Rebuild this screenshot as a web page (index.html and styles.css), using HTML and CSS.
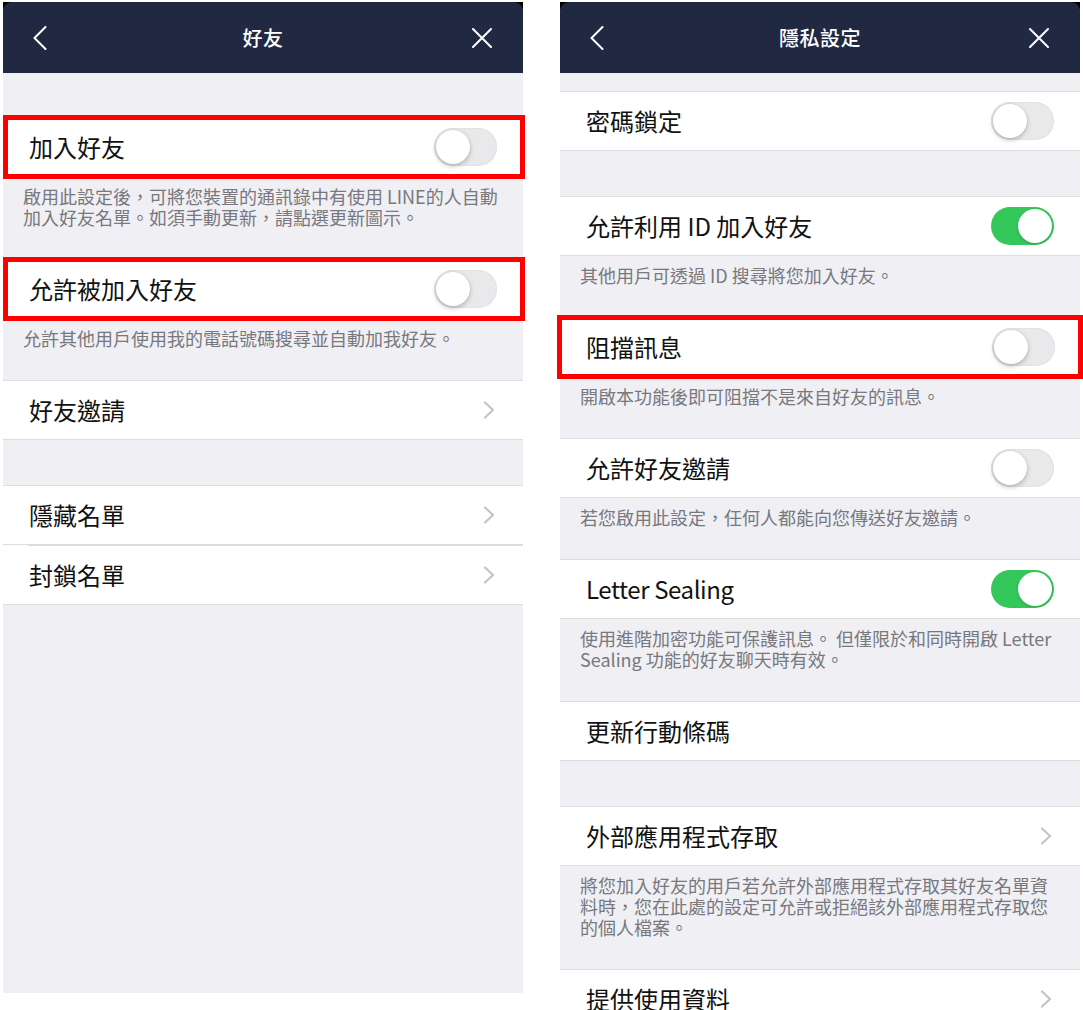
FILE: index.html
```html
<!DOCTYPE html>
<html lang="zh-Hant">
<head>
<meta charset="utf-8">
<title>好友 / 隱私設定</title>
<link rel="stylesheet" href="styles.css">
</head>
<body>
<div class="screens">
  <section class="panel panel-left">
    <header class="nav">
      <svg class="nav-back" width="14" height="24" viewBox="0 0 14 24"><polyline points="12.5,1 1.5,12 12.5,23" fill="none" stroke="#fff" stroke-width="2" stroke-linecap="round" stroke-linejoin="round"/></svg>
      <h1 class="nav-title">好友</h1>
      <svg class="nav-close" width="20" height="20" viewBox="0 0 20 20"><path d="M1 1 L19 19 M19 1 L1 19" fill="none" stroke="#fff" stroke-width="2" stroke-linecap="round"/></svg>
    </header>
    <div class="content">
      <div class="gap gap-l-top"></div>
      <div class="hl hl-left">
        <div class="row row-hl row-hl-left"><span class="label">加入好友</span><span class="toggle"></span></div>
      </div>
      <p class="desc">啟用此設定後，可將您裝置的通訊錄中有使用 LINE的人自動<br>加入好友名單。如須手動更新，請點選更新圖示。</p>
      <div class="hl hl-left">
        <div class="row row-hl row-hl-left"><span class="label">允許被加入好友</span><span class="toggle"></span></div>
      </div>
      <p class="desc">允許其他用戶使用我的電話號碼搜尋並自動加我好友。</p>
      <div class="row"><span class="label">好友邀請</span><svg class="chev" width="12" height="18" viewBox="0 0 12 18"><polyline points="2,1.5 10,9 2,16.5" fill="none" stroke="#c4c4c9" stroke-width="2.2" stroke-linecap="round" stroke-linejoin="round"/></svg></div>
      <div class="gap gap-45"></div>
      <div class="row row-group-top"><span class="label">隱藏名單</span><svg class="chev" width="12" height="18" viewBox="0 0 12 18"><polyline points="2,1.5 10,9 2,16.5" fill="none" stroke="#c4c4c9" stroke-width="2.2" stroke-linecap="round" stroke-linejoin="round"/></svg></div>
      <div class="row row-inset"><span class="label">封鎖名單</span><svg class="chev" width="12" height="18" viewBox="0 0 12 18"><polyline points="2,1.5 10,9 2,16.5" fill="none" stroke="#c4c4c9" stroke-width="2.2" stroke-linecap="round" stroke-linejoin="round"/></svg></div>
    </div>
  </section>

  <section class="panel panel-right">
    <header class="nav">
      <svg class="nav-back" width="14" height="24" viewBox="0 0 14 24"><polyline points="12.5,1 1.5,12 12.5,23" fill="none" stroke="#fff" stroke-width="2" stroke-linecap="round" stroke-linejoin="round"/></svg>
      <h1 class="nav-title">隱私設定</h1>
      <svg class="nav-close" width="20" height="20" viewBox="0 0 20 20"><path d="M1 1 L19 19 M19 1 L1 19" fill="none" stroke="#fff" stroke-width="2" stroke-linecap="round"/></svg>
    </header>
    <div class="content">
      <div class="gap gap-r-top"></div>
      <div class="row"><span class="label">密碼鎖定</span><span class="toggle"></span></div>
      <div class="gap gap-45"></div>
      <div class="row"><span class="label">允許利用 ID 加入好友</span><span class="toggle on"></span></div>
      <p class="desc">其他用戶可透過 ID 搜尋將您加入好友。</p>
      <div class="hl hl-right">
        <div class="row row-hl row-hl-right"><span class="label">阻擋訊息</span><span class="toggle"></span></div>
      </div>
      <p class="desc">開啟本功能後即可阻擋不是來自好友的訊息。</p>
      <div class="row"><span class="label">允許好友邀請</span><span class="toggle"></span></div>
      <p class="desc">若您啟用此設定，任何人都能向您傳送好友邀請。</p>
      <div class="row"><span class="label label-latin">Letter Sealing</span><span class="toggle on"></span></div>
      <p class="desc">使用進階加密功能可保護訊息。 但僅限於和同時開啟 Letter<br>Sealing 功能的好友聊天時有效。</p>
      <div class="row"><span class="label">更新行動條碼</span></div>
      <div class="gap gap-45"></div>
      <div class="row"><span class="label">外部應用程式存取</span><svg class="chev" width="12" height="18" viewBox="0 0 12 18"><polyline points="2,1.5 10,9 2,16.5" fill="none" stroke="#c4c4c9" stroke-width="2.2" stroke-linecap="round" stroke-linejoin="round"/></svg></div>
      <p class="desc">將您加入好友的用戶若允許外部應用程式存取其好友名單資<br>料時，您在此處的設定可允許或拒絕該外部應用程式存取您<br>的個人檔案。</p>
      <div class="row"><span class="label">提供使用資料</span><svg class="chev" width="12" height="18" viewBox="0 0 12 18"><polyline points="2,1.5 10,9 2,16.5" fill="none" stroke="#c4c4c9" stroke-width="2.2" stroke-linecap="round" stroke-linejoin="round"/></svg></div>
    </div>
  </section>
</div>
</body>
</html>
```

FILE: styles.css
```css
html, body {
  margin: 0;
  padding: 0;
  background: #ffffff;
  overflow: hidden;
}

body {
  font-family: "Noto Sans CJK TC", "Noto Sans", sans-serif;
  color: #111111;
}

.screens {
  display: flex;
  gap: 37px;
  padding: 2px 0 0 3px;
  height: 1008px;
  overflow: hidden;
}

.panel {
  width: 520px;
  flex: none;
  background: linear-gradient(#000, #000) top / 100% 8px no-repeat, #efeff4;
  display: flex;
  flex-direction: column;
}

.panel-left {
  height: 991px;
}

.panel-right {
  height: 1030px;
}

.nav {
  height: 71px;
  flex: none;
  background: #212942;
  border-radius: 9px 9px 0 0;
  display: grid;
  grid-template-columns: 1fr auto 1fr;
  align-items: center;
  padding: 0 31px 0 30px;
  box-sizing: border-box;
}

.nav-back {
  display: block;
  width: 14px;
  height: 24px;
  justify-self: start;
}

.nav-close {
  display: block;
  width: 20px;
  height: 20px;
  justify-self: end;
}

.nav-title {
  margin: 0;
  font-size: 20px;
  font-weight: 500;
  color: #ffffff;
  line-height: 1;
  letter-spacing: 0.5px;
  padding-left: 1px;
}

.content {
  display: flex;
  flex-direction: column;
}

.gap-l-top { height: 44px; }
.gap-r-top { height: 18px; }
.gap-45 { height: 45px; }

.row {
  height: 60px;
  box-sizing: border-box;
  background: #ffffff;
  border-top: 1px solid #dcdce1;
  border-bottom: 1px solid #dcdce1;
  display: flex;
  align-items: center;
  justify-content: space-between;
  padding: 0 26px;
}

.row + .row {
  border-top: none;
}

.row-inset {
  border-top: none;
  background: linear-gradient(#dcdce1, #dcdce1) 25px 0 / calc(100% - 25px) 1px no-repeat, #ffffff;
}

.label {
  font-size: 24px;
  line-height: 1;
  color: #111111;
  white-space: nowrap;
}

.label-latin {
  letter-spacing: -0.4px;
}

.chev {
  display: block;
  margin-right: 2px;
}

.hl {
  border: 5px solid #ff0000;
  margin-top: -2px;
  margin-bottom: -2px;
  position: relative;
  z-index: 1;
  background: #ffffff;
}

.hl-left {
  margin-right: -2px;
}

.hl-right {
  margin-left: -3px;
  margin-right: -3px;
}

.row-hl {
  height: 54px;
  border: none;
}

.row-hl-left {
  padding: 0 23px 0 21px;
}

.row-hl-right {
  padding: 0 23px 0 24px;
}

.desc {
  margin: 0;
  padding: 9px 10px 31px 20px;
  font-size: 18px;
  line-height: 21px;
  color: #78787d;
  white-space: nowrap;
}

.toggle {
  display: block;
  position: relative;
  width: 63px;
  height: 38px;
  border-radius: 19px;
  background: #e9e9eb;
  box-shadow: inset 0 0 0 1px #e2e2e4;
  flex: none;
}

.toggle::after {
  content: "";
  position: absolute;
  top: 2px;
  left: 2px;
  width: 34px;
  height: 34px;
  border-radius: 50%;
  background: #ffffff;
  box-shadow: 0 2px 5px rgba(0, 0, 0, 0.24), 0 0 0 0.5px rgba(0, 0, 0, 0.06);
}

.toggle.on {
  background: #34c759;
  box-shadow: none;
}

.toggle.on::after {
  left: auto;
  right: 2px;
  box-shadow: 0 1px 3px rgba(0, 0, 0, 0.18);
}
```
